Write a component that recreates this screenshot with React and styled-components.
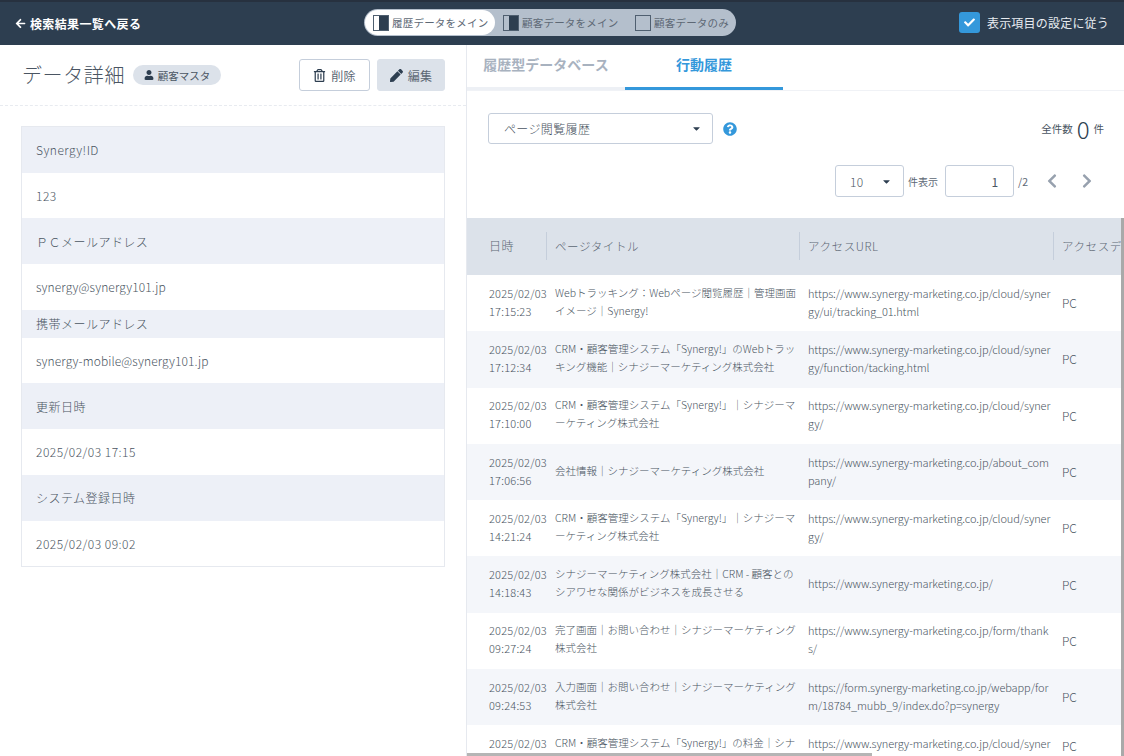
import React from "react";
import styled, { createGlobalStyle } from "styled-components";
import {
  FaArrowLeft,
  FaCaretDown,
  FaCheck,
  FaChevronLeft,
  FaChevronRight,
  FaPen,
  FaQuestionCircle,
  FaRegTrashAlt,
  FaUser,
} from "react-icons/fa";

const GlobalStyle = createGlobalStyle`
  html, body {
    margin: 0;
    padding: 0;
    background: #fff;
    overflow: hidden;
  }
  * {
    box-sizing: border-box;
  }
  body {
    font-family: "Noto Sans CJK JP", "Noto Sans", sans-serif;
    color: #4a5562;
  }
`;

const Page = styled.div`
  width: 1124px;
  height: 756px;
  display: flex;
  flex-direction: column;
  overflow: hidden;
`;

const TopBar = styled.header`
  height: 45px;
  flex: none;
  background: #2d3e50;
  border-top: 2px solid #27313f;
  display: grid;
  grid-template-columns: 349px 372px 1fr;
  align-items: center;
  padding: 0 15px;
  color: #fff;
`;

const BackLink = styled.a`
  display: flex;
  align-items: center;
  gap: 4px;
  font-size: 12px;
  font-weight: 700;
  letter-spacing: 0.03em;
  svg {
    font-size: 11px;
  }
`;

const ViewSwitch = styled.div`
  height: 27px;
  margin-top: -2px;
  background: #b4bfcc;
  border-radius: 14px;
  display: flex;
  align-items: center;
  padding: 1px;
`;

const ViewOption = styled.div`
  height: 25px;
  width: ${(p) => p.$width}px;
  border-radius: 13px;
  background: ${(p) => (p.$active ? "#fff" : "transparent")};
  color: #5d6875;
  display: flex;
  align-items: center;
  gap: 3px;
  padding-left: 8px;
  font-size: 10.5px;
  white-space: nowrap;
  letter-spacing: 0.02em;
`;

const SettingCheck = styled.label`
  justify-self: end;
  display: flex;
  align-items: center;
  gap: 7px;
  font-size: 12px;
  letter-spacing: 0.017em;
  color: #e8ecf1;
  margin-top: -2px;
`;

const CheckBox = styled.span`
  width: 21px;
  height: 21px;
  border-radius: 3px;
  background: #3498db;
  color: #fff;
  display: flex;
  align-items: center;
  justify-content: center;
  font-size: 11px;
`;

const Body = styled.div`
  flex: 1;
  display: flex;
  min-height: 0;
`;

const LeftPane = styled.section`
  width: 466px;
  flex: none;
`;

const DetailHead = styled.div`
  height: 61px;
  border-bottom: 1px dashed #e8ebf0;
  display: flex;
  align-items: center;
  padding: 0 21px 0 22px;
`;

const Title = styled.h1`
  margin: 0 8px 0 0;
  font-size: 20px;
  font-weight: 300;
  line-height: 1;
  letter-spacing: 0.03em;
  color: #4a5562;
`;

const Badge = styled.span`
  height: 20px;
  width: 88px;
  background: #dce2ea;
  border-radius: 10px;
  display: flex;
  align-items: center;
  justify-content: center;
  gap: 4px;
  font-size: 10.5px;
  color: #4a5562;
  svg {
    font-size: 10px;
    color: #2d3e50;
  }
`;

const HeadActions = styled.div`
  margin-left: auto;
  display: flex;
  gap: 7px;
`;

const ActionButton = styled.button`
  height: 32px;
  width: ${(p) => p.$width}px;
  border: 1px solid ${(p) => (p.$filled ? "#dce2ea" : "#c5cedb")};
  background: ${(p) => (p.$filled ? "#dce2ea" : "#fff")};
  border-radius: 3px;
  display: flex;
  align-items: center;
  justify-content: center;
  gap: 5px;
  padding: 0;
  font-family: inherit;
  font-size: 12px;
  letter-spacing: 0.03em;
  color: #5d6875;
  svg {
    font-size: 13px;
    color: #2d3e50;
  }
`;

const DetailCard = styled.dl`
  margin: 20px 21px 0;
  border: 1px solid #e6e9ef;
  font-size: 12px;
  letter-spacing: 0.04em;
`;

const FieldLabel = styled.dt`
  height: ${(p) => p.$height || 45.7}px;
  background: #edf0f7;
  display: flex;
  align-items: center;
  padding-left: 14px;
  color: #4a5562;
  font-weight: 300;
`;

const FieldValue = styled.dd`
  margin: 0;
  height: 45.7px;
  display: flex;
  align-items: center;
  padding-left: 14px;
  font-weight: 300;
  color: #4a5562;
  letter-spacing: ${(p) => (p.$tight ? "0.01em" : "inherit")};
`;

const RightPane = styled.section`
  flex: 1;
  min-width: 0;
  border-left: 1px solid #e6e9ef;
  display: flex;
  flex-direction: column;
  position: relative;
`;

const Tabs = styled.nav`
  height: 46px;
  flex: none;
  display: flex;
  border-bottom: 1px solid #f0f2f6;
`;

const Tab = styled.div`
  width: 158px;
  height: 45px;
  display: flex;
  justify-content: center;
  padding-top: 9px;
  font-size: 14px;
  font-weight: 700;
  color: ${(p) => (p.$active ? "#3498db" : "#a8b2bf")};
  border-bottom: 3px solid ${(p) => (p.$active ? "#3498db" : "#edf0f5")};
`;

const FilterRow = styled.div`
  margin-top: 22px;
  height: 31px;
  flex: none;
  display: flex;
  align-items: center;
  padding: 0 20px 0 21px;
`;

const SelectBox = styled.div`
  height: ${(p) => p.$height}px;
  width: ${(p) => p.$width}px;
  flex: none;
  border: 1px solid #c5cedb;
  border-radius: 3px;
  background: #fff;
  display: flex;
  align-items: center;
  justify-content: space-between;
  padding: 0 ${(p) => p.$right}px 0 ${(p) => p.$left}px;
  font-size: 12px;
  font-weight: 300;
  letter-spacing: 0.03em;
  color: #4a5562;
  svg {
    font-size: 11px;
    color: #2d3e50;
  }
`;

const HelpIcon = styled.span`
  margin-left: 10px;
  display: flex;
  color: #3498db;
  font-size: 14px;
`;

const TotalCount = styled.div`
  margin-left: auto;
  display: flex;
  align-items: center;
  gap: 4px;
  font-size: 10.5px;
  color: #4a5562;
`;

const CountNumber = styled.span`
  font-size: 24px;
  font-weight: 300;
  line-height: 1;
  color: #2d3e50;
`;

const PagerRow = styled.div`
  margin-top: 21px;
  height: 32px;
  flex: none;
  display: flex;
  align-items: center;
  justify-content: flex-end;
  padding-right: 29px;
  font-size: 10.5px;
  color: #5d6875;
`;

const PerPageLabel = styled.span`
  margin-left: 4px;
  font-size: 10px;
`;

const PageInput = styled.div`
  width: 69px;
  height: 32px;
  margin: 0 4px 0 7px;
  border: 1px solid #c5cedb;
  border-radius: 3px;
  display: flex;
  align-items: center;
  justify-content: flex-end;
  padding-right: 15px;
  font-size: 12px;
  color: #4a5562;
`;

const PageArrow = styled.span`
  display: flex;
  margin-left: ${(p) => p.$gap}px;
  color: #97a1ae;
  font-size: 16px;
`;

const TableWrap = styled.div`
  margin-top: 21px;
  flex: 1;
  min-height: 0;
  overflow: hidden;
`;

const Table = styled.table`
  border-collapse: collapse;
  table-layout: fixed;
  width: 760px;
`;

const HeadCell = styled.th`
  height: 57px;
  background: #dce2ea;
  padding: 0 0 2px;
  font-size: ${(p) => (p.$first ? "12px" : "11.5px")};
  font-weight: 300;
  letter-spacing: 0.05em;
  color: #5d6875;
  text-align: left;
  white-space: nowrap;
  overflow: hidden;
`;

const HeadInner = styled.div`
  height: 28px;
  display: flex;
  align-items: center;
  padding-left: ${(p) => p.$left}px;
  border-right: 1px solid ${(p) => (p.$last ? "transparent" : "#c5cedb")};
`;

const Row = styled.tr`
  height: 56.3px;
  background: ${(p) => (p.$odd ? "#f4f6fa" : "#fff")};
`;

const Cell = styled.td`
  padding: 0 0 3px 8px;
  font-size: 11px;
  line-height: 18px;
  color: #4a5562;
  font-weight: 300;
  word-break: break-all;
  vertical-align: middle;
`;

const DateCell = styled(Cell)`
  padding-left: 22px;
  letter-spacing: 0.02em;
`;

const TitleCell = styled(Cell)`
  font-size: 10.5px;
`;

const UrlCell = styled(Cell)`
  letter-spacing: -0.1px;
`;

const DeviceCell = styled(Cell)`
  font-size: 12px;
  padding-bottom: ${(p) => (p.$clipped ? 16 : 0)}px;
`;

const VerticalBar = styled.div`
  position: absolute;
  top: 173px;
  right: 0;
  bottom: 0;
  width: 3px;
  background: #a9a9a9;
`;

const HorizontalBar = styled.div`
  position: absolute;
  left: 0;
  bottom: 0;
  width: 405px;
  height: 3px;
  background: #b5b5b5;
`;

// 画面レイアウト切替のアイコン
const LayoutIcon = ({ left, right }) => (
  <svg width="16" height="16" viewBox="0 0 16 16">
    <rect x="0.5" y="0.5" width="15" height="15" fill="#b4bfcc" stroke="#4f5f70" />
    <rect x="1" y="1" width="5" height="14" fill={left} />
    <rect x="6" y="1" width="9" height="14" fill={right} />
  </svg>
);

const fields = [
  { label: "Synergy!ID", value: "123" },
  { label: "ＰＣメールアドレス", value: "synergy@synergy101.jp", tight: true },
  { label: "携帯メールアドレス", value: "synergy-mobile@synergy101.jp", labelHeight: 28, tight: true },
  { label: "更新日時", value: "2025/02/03 17:15" },
  { label: "システム登録日時", value: "2025/02/03 09:02" },
];

const BASE = "https://www.synergy-marketing.co.jp";

const rows = [
  ["2025/02/03", "17:15:23", "Webトラッキング：Webページ閲覧履歴｜管理画面イメージ｜Synergy!", `${BASE}/cloud/synergy/ui/tracking_01.html`],
  ["2025/02/03", "17:12:34", "CRM・顧客管理システム「Synergy!」のWebトラッキング機能｜シナジーマーケティング株式会社", `${BASE}/cloud/synergy/function/tacking.html`],
  ["2025/02/03", "17:10:00", "CRM・顧客管理システム「Synergy!」｜シナジーマーケティング株式会社", `${BASE}/cloud/synergy/`],
  ["2025/02/03", "17:06:56", "会社情報｜シナジーマーケティング株式会社", `${BASE}/about_company/`],
  ["2025/02/03", "14:21:24", "CRM・顧客管理システム「Synergy!」｜シナジーマーケティング株式会社", `${BASE}/cloud/synergy/`],
  ["2025/02/03", "14:18:43", "シナジーマーケティング株式会社｜CRM - 顧客とのシアワセな関係がビジネスを成長させる", `${BASE}/`],
  ["2025/02/03", "09:27:24", "完了画面｜お問い合わせ｜シナジーマーケティング株式会社", `${BASE}/form/thanks/`],
  ["2025/02/03", "09:24:53", "入力画面｜お問い合わせ｜シナジーマーケティング株式会社", "https://form.synergy-marketing.co.jp/webapp/form/18784_mubb_9/index.do?p=synergy"],
  ["2025/02/03", "09:20:11", "CRM・顧客管理システム「Synergy!」の料金｜シナジーマーケティング株式会社", `${BASE}/cloud/synergy/price/`],
];

export default function App() {
  return (
    <Page>
      <GlobalStyle />
      <TopBar>
        <BackLink>
          <FaArrowLeft />
          検索結果一覧へ戻る
        </BackLink>
        <ViewSwitch>
          <ViewOption $active $width={130}>
            <LayoutIcon left="#fff" right="#2d3e50" />
            履歴データをメイン
          </ViewOption>
          <ViewOption $width={132}>
            <LayoutIcon left="#b4bfcc" right="#2d3e50" />
            顧客データをメイン
          </ViewOption>
          <ViewOption $width={108}>
            <LayoutIcon left="#b4bfcc" right="#b4bfcc" />
            顧客データのみ
          </ViewOption>
        </ViewSwitch>
        <SettingCheck>
          <CheckBox>
            <FaCheck />
          </CheckBox>
          表示項目の設定に従う
        </SettingCheck>
      </TopBar>
      <Body>
        <LeftPane>
          <DetailHead>
            <Title>データ詳細</Title>
            <Badge>
              <FaUser />
              顧客マスタ
            </Badge>
            <HeadActions>
              <ActionButton $width={71}>
                <FaRegTrashAlt />
                削除
              </ActionButton>
              <ActionButton $width={68} $filled>
                <FaPen />
                編集
              </ActionButton>
            </HeadActions>
          </DetailHead>
          <DetailCard>
            {fields.map((f) => (
              <React.Fragment key={f.label}>
                <FieldLabel $height={f.labelHeight}>{f.label}</FieldLabel>
                <FieldValue $tight={f.tight}>{f.value}</FieldValue>
              </React.Fragment>
            ))}
          </DetailCard>
        </LeftPane>
        <RightPane>
          <Tabs>
            <Tab>履歴型データベース</Tab>
            <Tab $active>行動履歴</Tab>
          </Tabs>
          <FilterRow>
            <SelectBox $width={225} $height={31} $left={15} $right={10}>
              ページ閲覧履歴
              <FaCaretDown />
            </SelectBox>
            <HelpIcon>
              <FaQuestionCircle />
            </HelpIcon>
            <TotalCount>
              全件数 <CountNumber>0</CountNumber> 件
            </TotalCount>
          </FilterRow>
          <PagerRow>
            <SelectBox $width={69} $height={32} $left={14} $right={11}>
              10
              <FaCaretDown />
            </SelectBox>
            <PerPageLabel>件表示</PerPageLabel>
            <PageInput>1</PageInput>
            /2
            <PageArrow $gap={16}>
              <FaChevronLeft />
            </PageArrow>
            <PageArrow $gap={19}>
              <FaChevronRight />
            </PageArrow>
          </PagerRow>
          <TableWrap>
            <Table>
              <colgroup>
                <col style={{ width: 80 }} />
                <col style={{ width: 253 }} />
                <col style={{ width: 254 }} />
                <col style={{ width: 173 }} />
              </colgroup>
              <thead>
                <tr>
                  <HeadCell $first>
                    <HeadInner $left={22}>日時</HeadInner>
                  </HeadCell>
                  <HeadCell>
                    <HeadInner $left={8}>ページタイトル</HeadInner>
                  </HeadCell>
                  <HeadCell>
                    <HeadInner $left={8}>アクセスURL</HeadInner>
                  </HeadCell>
                  <HeadCell>
                    <HeadInner $left={8} $last>
                      アクセスデバイス
                    </HeadInner>
                  </HeadCell>
                </tr>
              </thead>
              <tbody>
                {rows.map((r, i) => (
                  <Row key={r[1]} $odd={i % 2 === 1}>
                    <DateCell>
                      {r[0]}
                      <br />
                      {r[1]}
                    </DateCell>
                    <TitleCell>{r[2]}</TitleCell>
                    <UrlCell>{r[3]}</UrlCell>
                    <DeviceCell $clipped={i === rows.length - 1}>PC</DeviceCell>
                  </Row>
                ))}
              </tbody>
            </Table>
          </TableWrap>
          <VerticalBar />
          <HorizontalBar />
        </RightPane>
      </Body>
    </Page>
  );
}
